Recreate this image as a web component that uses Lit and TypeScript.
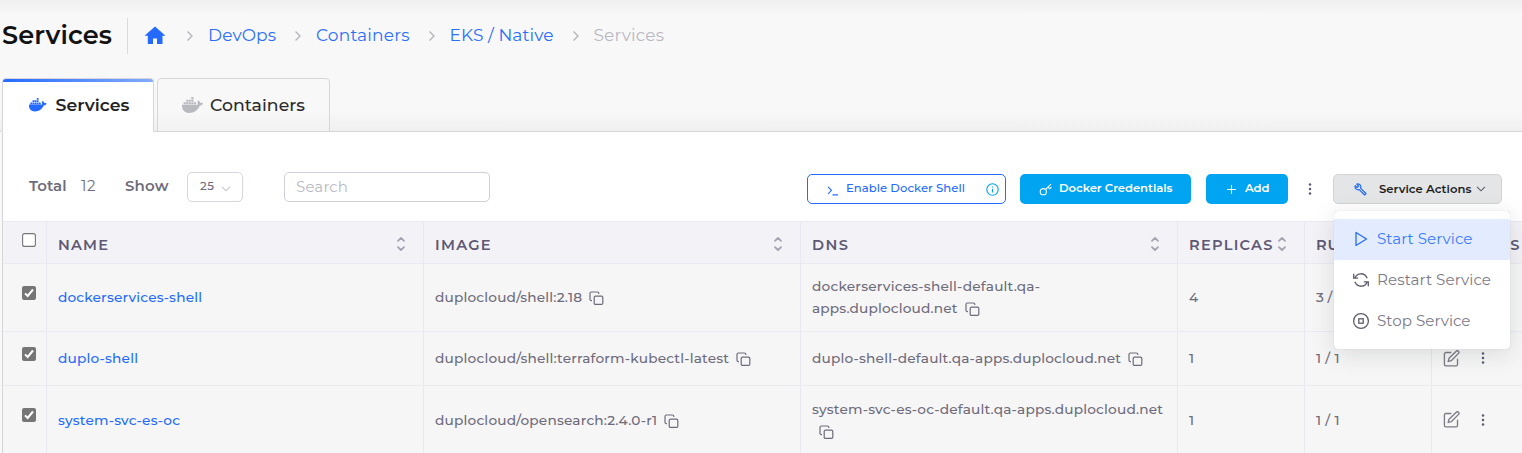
import { LitElement, html, css, svg } from "lit";
import { customElement, property } from "lit/decorators.js";

/** One line of text tracked out so that it fills a given width. */
@customElement("fit-text")
class FitText extends LitElement {
  @property({ type: Number }) w = 0;
  static styles = css`
    :host { display: inline-block; white-space: nowrap; }
  `;
  firstUpdated() {
    const n = (this.textContent || "").trim().length;
    const natural = this.getBoundingClientRect().width;
    if (n > 1 && this.w) {
      const ls = (this.w - natural) / (n - 1);
      this.style.letterSpacing = `${ls.toFixed(3)}px`;
      this.style.width = `${this.w}px`;
    }
  }
  render() {
    return html`<slot></slot>`;
  }
}

const whale = svg`<path fill="currentColor" d="M349.9 236.3h-66.1v-59.4h66.1v59.4zm0-204.3h-66.1v60.7h66.1V32zm78.2 144.8H362v59.4h66.1v-59.4zm-156.3-72.1h-66.1v60.1h66.1v-60.1zm78.1 0h-66.1v60.1h66.1v-60.1zm276.8 100c-14.4-9.7-47.6-13.2-73.1-8.4-3.3-24-16.7-44.9-41.1-63.7l-14-9.3-9.3 14c-18.4 27.8-23.4 73.6-3.7 103.8-8.7 4.7-25.8 11.1-48.4 10.7H2.4c-8.7 50.8 5.8 116.8 44 162.1 37.1 43.9 92.7 66.2 165.4 66.2 157.4 0 273.9-72.5 328.4-204.2 21.4.4 67.6.1 91.3-45.2 1.5-2.5 6.6-13.2 8.5-17.1l-13.3-8.9zm-511.1-27.9h-66v59.4h66.1v-59.4zm78.1 0h-66.1v59.4h66.1v-59.4zm78.1 0h-66.1v59.4h66.1v-59.4zm-78.1-72.1h-66.1v60.1h66.1v-60.1z"/>`;

const copyIcon = html`<svg class="copy" viewBox="0 0 15 15" width="15" height="15" fill="none" stroke="#6e6b7b" stroke-width="1.2">
  <rect x="5.2" y="5.2" width="8.6" height="8.2" rx="1.2"/><path d="M3 9.6H2.4A1.4 1.4 0 0 1 1 8.2V2.4A1.4 1.4 0 0 1 2.4 1h6a1.4 1.4 0 0 1 1.4 1.4v.5"/></svg>`;

const editIcon = html`<svg viewBox="0 0 24 24" width="17" height="17" fill="none" stroke="#7d7c84" stroke-width="1.9" stroke-linecap="round" stroke-linejoin="round">
  <path d="M11 3.500H4a2 2 0 0 0-2 2V20.500a2 2 0 0 0 2 2h14.500a2 2 0 0 0 2-2V13"/><path d="M18.700 1.800a2.100 2.100 0 0 1 3.200 3L12 14.900 7.300 16.200l1.200-4.500z"/></svg>`;

const dots = html`<svg viewBox="0 0 4 14" width="4" height="14" fill="#5e5873"><circle cx="2" cy="2.400" r="1.250"/><circle cx="2" cy="7" r="1.250"/><circle cx="2" cy="11.600" r="1.250"/></svg>`;

const sortIcon = html`<svg class="sort" viewBox="0 0 10 16" width="10" height="16" fill="none" stroke="#a5a2b2" stroke-width="1.8" stroke-linecap="round" stroke-linejoin="round">
  <path d="M2 4.800 5 2 8 4.800M2 11.200 5 14 8 11.200"/></svg>`;

const crumb = html`<svg class="sep" viewBox="0 0 8 12" width="8" height="12" fill="none" stroke="#b4b4ba" stroke-width="1.4"><path d="M1.500 1.500 6 6 1.500 10.500"/></svg>`;

const chevron = (color: string) => html`<svg viewBox="0 0 10 6" width="10" height="6" fill="none" stroke=${color} stroke-width="1.1"><path d="M1 .8 5 4.800 9 .8"/></svg>`;

const box = (on: boolean) => html`<svg class="check" viewBox="0 0 14 14" width="14" height="14">
  ${on
    ? svg`<rect width="14" height="14" rx="2" fill="#767676"/><path d="M3 7.400 5.700 10 11 3.500" fill="none" stroke="#fff" stroke-width="2"/>`
    : svg`<rect x=".6" y=".6" width="12.800" height="12.800" rx="2" fill="#fff" stroke="#767676" stroke-width="1.100"/>`}</svg>`;

type Line = [string, number];
interface Row { size: string; name: Line; image: Line; dns: Line[]; replicas: string; running: Line; }

const rows: Row[] = [
  { size: "r1", name: ["dockerservices-shell", 144], image: ["duplocloud/shell:2.18", 147],
    dns: [["dockerservices-shell-default.qa-", 228], ["apps.duplocloud.net", 145.5]], replicas: "4", running: ["3 / 3", 28] },
  { size: "r2", name: ["duplo-shell", 80], image: ["duplocloud/shell:terraform-kubectl-latest", 294],
    dns: [["duplo-shell-default.qa-apps.duplocloud.net", 309]], replicas: "1", running: ["1 / 1", 23.5] },
  { size: "r3", name: ["system-svc-es-oc", 122], image: ["duplocloud/opensearch:2.4.0-r1", 222],
    dns: [["system-svc-es-oc-default.qa-apps.duplocloud.net", 351], ["", 0]], replicas: "1", running: ["1 / 1", 23.5] },
];

@customElement("app-root")
class AppRoot extends LitElement {
  static styles = css`
    :host { display: block; height: 453px; overflow: hidden; position: relative; background: #f8f8f8;
      font-family: Montserrat, Inter, "Open Sans", sans-serif; color: #6e6b7b; font-size: 13.700px; }
    * { box-sizing: border-box; }
    svg { display: block; flex: none; }
    .head { height: 78px; display: flex; align-items: flex-start; padding: 18px 0 0 2px;
      background: linear-gradient(#efefef, #f8f8f8 16px); }
    .title { font-size: 25.600px; font-weight: 600; color: #121212; line-height: 33px; height: 36px; width: 126px; border-right: 1px solid #d6dce1; }
    .home { margin: 8px 0 0 16px; }
    .crumbs { display: flex; align-items: center; height: 34px; font-size: 17px; color: #2a6ff8; }
    .sep { margin: 2px 14px 0 18px; }
    .sep:first-child { margin-left: 20px; margin-right: 14px; }
    .crumbs .now { color: #b9b9c3; }
    .tabs { display: flex; height: 54px; padding-left: 2px; gap: 3px; align-items: stretch;
      background: linear-gradient(#f8f8f8 32px, #efefef 54px); box-shadow: inset 0 -1px #d8d6da; }
    .tab { display: flex; align-items: center; border: 1px solid #d8d6da; border-radius: 4px 4px 0 0; font-size: 17.300px;
      font-weight: 500; color: #2b2b2b; height: 54px; background: linear-gradient(#f8f8f8 32px, #f1f1f1 54px); }
    .tab fit-text { margin-bottom: 2px; }
    .tab.on { width: 152px; background: linear-gradient(90deg, #246bfd, #83abfc) 0 0 / 100% 3px no-repeat #fff; border-bottom-color: #fff; padding-left: 26px; font-weight: 600; color: #222; }
    .tab.off { width: 173px; padding-left: 24px; }
    .tab svg { color: #b9bac0; margin-right: 7px; }
    .tab.on svg { color: #246bfd; margin-right: 9px; }
    .card { margin-left: 2px; border-left: 1px solid #d5d5d5; background: #fff; height: 321px; }
    .tools { height: 89px; display: flex; align-items: flex-start; padding: 40px 0 0 26px; }
    .lbl { font-size: 15px; line-height: 28px; font-weight: 600; }
    .total { width: 52px; }
    .count { width: 44px; font-weight: 400; }
    .show { width: 62px; }
    .select { width: 56px; height: 30px; border: 1px solid #d8d6de; border-radius: 5px; display: flex; align-items: center;
      padding: 0 0 2px 12px; gap: 8px; font-size: 11.700px; font-weight: 500; }
    .select svg { margin-top: 5px; margin-left: -1px; }
    .search { width: 206px; height: 30px; border: 1px solid #d0cfda; border-radius: 5px; margin-left: 41px; padding-left: 11px;
      line-height: 28px; font-size: 15px; color: #b9b9c3; }
    .btn { height: 30px; margin-top: 2px; border-radius: 5px; display: flex; align-items: center; font-size: 11.650px; font-weight: 600; color: #fff; background: #00a4f0; }
    .btn fit-text { margin-bottom: 2px; }
    .shell { width: 199px; margin-left: 317px; border: 1px solid #246bfd; background: #fff; color: #246bfd; padding-left: 19px; font-weight: 500; }
    .shell .prompt { margin: 3px 7px 0 0; }
    .shell .info { margin: 1px 0 0 21px; }
    .cred { width: 171px; margin-left: 14px; padding-left: 19px; }
    .cred svg { margin: 1px 7px 0 0; }
    .add { width: 82px; margin-left: 15px; padding-left: 20px; }
    .add svg { margin: 1px 8px 0 0; }
    .more { margin: 10px 0 0 20px; }
    .act { width: 169px; margin-left: 21px; background: #e4e5e7; border: 1px solid #d3d3d6; color: #1c1c1c; padding-left: 20px; }
    .act fit-text { margin: 0 4px 0 12px; }
    .row { display: grid; grid-template-columns: 44px 377px 377px 377px 127px 127px 1fr; border-bottom: 1px solid #ebe9f1; background: #f6f6f6; font-weight: 500; }
    .row > div { border-right: 1px solid #e9e7f0; padding-left: 11px; padding-bottom: 1px; display: flex; align-items: center; }
    .row > div:last-child { border-right: 0; padding-left: 11px; padding-bottom: 0; }
    .hd { height: 43px; border-top: 1px solid #ebe9f1; background: #f3f2f7; font-size: 14.600px; font-weight: 600; color: #5e5873; }
    .hd > div, .hd > div:last-child { justify-content: space-between; padding: 5px 17px 0 11px; }
    .hd .sort { margin-top: -3px; }
    .hd > div.first { justify-content: flex-start; }
    .row > div.first { padding-left: 19px; align-items: flex-start; }
    .hd > div.first { padding-top: 11px; }
    .r1 { height: 68px; } .r1 > .first { padding-top: 22px; }
    .r2 { height: 54px; } .r2 > .first { padding-top: 15px; }
    .r3 { height: 69px; } .r3 > .first { padding-top: 22px; }
    .r3 > div { padding-bottom: 0; }
    .row > .name { color: #246bfd; font-weight: 500; }
    .row > .img { gap: 7px; }
    .img .copy { margin-top: 3px; }
    .row > .dns { flex-direction: column; align-items: flex-start; justify-content: center; }
    .line { display: flex; align-items: center; gap: 7px; height: 22px; }
    .line .copy { margin-top: 3px; }
    .row > .ops:last-child { padding-bottom: 1px; }
    .ops { gap: 21px; }
    .menu { position: absolute; left: 1334px; top: 211px; width: 176px; height: 138px; padding: 8px 0 7px; border-radius: 4px;
      background: #fff; box-shadow: 0 5px 25px rgba(34, 41, 47, .13), 0 0 1px rgba(34, 41, 47, .3); }
    .item { height: 41px; display: flex; align-items: center; padding-left: 18px; gap: 7px; font-size: 15.150px; color: #7b7986; }
    .item fit-text { margin-bottom: 2px; }
    .item svg { margin-bottom: 1px; }
    .item.on { background: #e3ecfe; color: #3b79fb; }
  `;

  private tx(t: Line) {
    return html`<fit-text w=${t[1]}>${t[0]}</fit-text>`;
  }

  private head(label: string, w: number) {
    return html`<div>${this.tx([label, w])}${sortIcon}</div>`;
  }

  private row(r: Row) {
    return html`<div class="row ${r.size}">
      <div class="first">${box(true)}</div>
      <div class="name">${this.tx(r.name)}</div>
      <div class="img">${this.tx(r.image)}${copyIcon}</div>
      <div class="dns">${r.dns.map((l, i) => html`<div class="line">${this.tx(l)}${i === r.dns.length - 1 ? copyIcon : ""}</div>`)}</div>
      <div>${r.replicas}</div>
      <div>${this.tx(r.running)}</div>
      <div class="ops">${editIcon}${dots}</div>
    </div>`;
  }

  render() {
    return html`
      <div class="head">
        <div class="title">${this.tx(["Services", 110])}</div>
        <svg class="home" viewBox="0 0 22 19" width="22" height="19" fill="#246bfd"><path d="M11 .5 21.500 9.800H18.500V18H13V12.500H9V18H3.800V9.800H.5z"/></svg>
        <div class="crumbs">
          ${crumb}${this.tx(["DevOps", 68])}
          ${crumb}${this.tx(["Containers", 93.5])}
          ${crumb}${this.tx(["EKS / Native", 104])}
          ${crumb}<span class="now">${this.tx(["Services", 70.5])}</span>
        </div>
      </div>
      <div class="tabs">
        <div class="tab on"><svg viewBox="0 30 640 452" width="17.500" height="13.500" preserveAspectRatio="none">${whale}</svg>${this.tx(["Services", 74])}</div>
        <div class="tab off"><svg viewBox="0 30 640 452" width="21" height="16" preserveAspectRatio="none">${whale}</svg>${this.tx(["Containers", 95])}</div>
      </div>
      <div class="card">
        <div class="tools">
          <div class="lbl total">${this.tx(["Total", 37.5])}</div>
          <div class="lbl count">${this.tx(["12", 14.5])}</div>
          <div class="lbl show">${this.tx(["Show", 43.5])}</div>
          <div class="select">${this.tx(["25", 14])}${chevron("#c4c4cc")}</div>
          <div class="search">${this.tx(["Search", 52])}</div>
          <div class="btn shell">
            <svg class="prompt" viewBox="0 0 12 10" width="12" height="10" fill="none" stroke="currentColor" stroke-width="1.100"><path d="M1 .8 4.500 4.300 1 7.800M5.500 8.900H11"/></svg>
            ${this.tx(["Enable Docker Shell", 119])}
            <svg class="info" viewBox="0 0 13 13" width="13" height="13" fill="none" stroke="#00a4f0" stroke-width="1.100"><circle cx="6.500" cy="6.500" r="5.700"/><path d="M6.500 5.800V9.600M6.500 3.400V4.600"/></svg>
          </div>
          <div class="btn cred">
            <svg viewBox="0 0 13 13" width="13" height="13" fill="none" stroke="#fff" stroke-width="1.100"><circle cx="4.300" cy="8.700" r="3.100"/><path d="M6.500 6.500 12 1.200M9 4l1.800 1.800L12.500 4.200"/></svg>
            ${this.tx(["Docker Credentials", 113.5])}
          </div>
          <div class="btn add">
            <svg viewBox="0 0 11 11" width="11" height="11" fill="none" stroke="#fff" stroke-width="1.100"><path d="M5.500 1V10M1 5.500H10"/></svg>
            ${this.tx(["Add", 24.5])}
          </div>
          <div class="more">${dots}</div>
          <div class="btn act">
            <svg viewBox="0 0 14 14" width="13" height="13" fill="none" stroke="#246bfd" stroke-width="1.300" stroke-linejoin="round"><path d="M1.300 2.800 3.400 4.800 5 3.300 3 1.200C4.800.4 7 1.600 7.300 3.500 7.400 4.300 7.300 4.900 7 5.500L12.900 11.300 11.400 12.900 5.600 7.200C3 8 .5 5.600 1.300 2.800z"/></svg>
            ${this.tx(["Service Actions", 92.5])}
            ${chevron("#5b5b63")}
          </div>
        </div>
        <div class="row hd">
          <div class="first">${box(false)}</div>
          ${this.head("NAME", 50)}${this.head("IMAGE", 55.5)}${this.head("DNS", 36)}${this.head("REPLICAS", 83.5)}${this.head("RUNNING", 78)}
          <div>${this.tx(["ACTIONS", 76.5])}</div>
        </div>
        ${rows.map((r) => this.row(r))}
      </div>
      <div class="menu">
        <div class="item on">
          <svg viewBox="0 0 18 18" width="18" height="18" fill="none" stroke="#246bfd" stroke-width="1.300" stroke-linejoin="round"><path d="M4 2.500V15.500L14.500 9z"/></svg>${this.tx(["Start Service", 95.5])}
        </div>
        <div class="item">
          <svg viewBox="0 0 18 18" width="18" height="18" fill="none" stroke="#5e5c6b" stroke-width="1.300"><path d="M1.700 2.800V7.200H6.200M16.300 15.200V10.800H11.800M3 6.800C5 1.700 12.500 1 15.200 7.300M15 11.200C13 16.300 5.500 17 2.800 10.700"/></svg>${this.tx(["Restart Service", 114])}
        </div>
        <div class="item">
          <svg viewBox="0 0 18 18" width="18" height="18" fill="none" stroke="#5e5c6b" stroke-width="1.300"><circle cx="9" cy="9" r="7.400"/><rect x="6.800" y="6.800" width="4.400" height="4.400"/></svg>${this.tx(["Stop Service", 93.5])}
        </div>
      </div>`;
  }
}
